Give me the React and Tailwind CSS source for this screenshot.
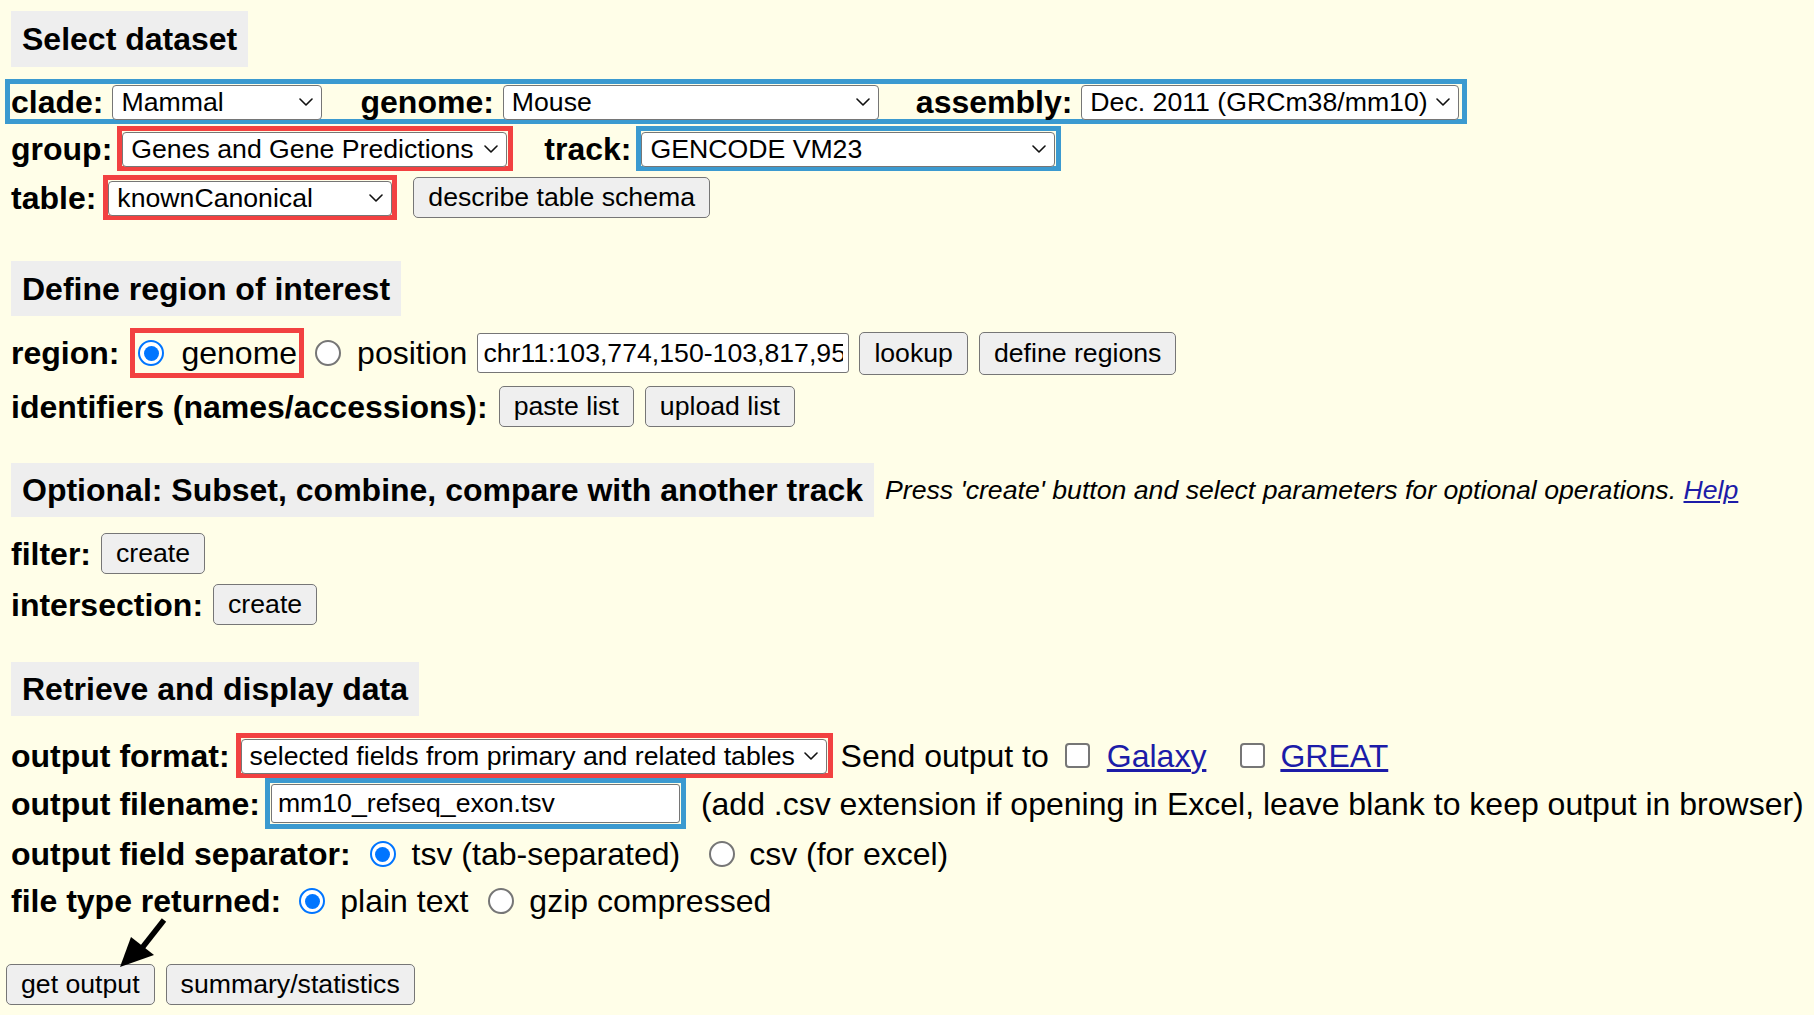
import React from 'react'

// small "v" used by the select boxes
function Chevron() {
  return (
    <svg
      className="pointer-events-none absolute right-[9px] top-1/2 -translate-y-1/2"
      width="14"
      height="8"
      viewBox="0 0 14 8"
      fill="none"
    >
      <path d="M1 1l6 6 6-6" stroke="#111" strokeWidth="1.6" strokeLinecap="round" strokeLinejoin="round" />
    </svg>
  )
}

function Select({ value, className = '' }) {
  return (
    <div className={`relative h-[35px] shrink-0 ${className}`}>
      <select
        defaultValue={value}
        className="h-full w-full appearance-none rounded-[4px] border border-[#767676] bg-white pl-[8px] pr-[28px] text-[26.67px] leading-none text-black outline-none"
      >
        <option>{value}</option>
      </select>
      <Chevron />
    </div>
  )
}

function Button({ children, className = '' }) {
  return (
    <button
      type="button"
      className={`h-[41px] shrink-0 rounded-[5px] border border-[#767676] bg-[#efefef] px-[14px] text-[26.67px] leading-none text-black ${className}`}
    >
      {children}
    </button>
  )
}

function Radio({ checked, className = '' }) {
  if (checked) {
    return (
      <span className={`flex h-[26px] w-[26px] shrink-0 items-center justify-center rounded-full border-2 border-[#0075ff] bg-white ${className}`}>
        <span className="h-[15px] w-[15px] rounded-full bg-[#0075ff]" />
      </span>
    )
  }
  return <span className={`h-[26px] w-[26px] shrink-0 rounded-full border-2 border-[#767676] bg-white ${className}`} />
}

function Checkbox({ className = '' }) {
  return <span className={`h-[25px] w-[25px] shrink-0 rounded-[4px] border-2 border-[#767676] bg-white ${className}`} />
}

function Title({ children, className = '' }) {
  return (
    <div className={`flex w-fit shrink-0 items-center bg-[#eeeeee] px-[11px] text-[32px] font-bold ${className}`}>
      {children}
    </div>
  )
}

export default function App() {
  return (
    <div className="relative min-h-screen bg-[#fffee8] pl-[11px] pt-[11px] font-['Liberation_Sans',Arial,Helvetica,sans-serif] text-[32px] leading-none text-black">
      {/* Select dataset */}
      <Title className="h-[56px]">Select dataset</Title>

      <div className="mt-[12px] -ml-[6px] flex h-[45px] w-fit items-center border-[5px] border-[#3b9ad0] pl-[1px] pr-[3px]">
        <span className="font-bold">clade:</span>
        <Select value="Mammal" className="ml-[9px] w-[210px]" />
        <span className="ml-[38px] font-bold">genome:</span>
        <Select value="Mouse" className="ml-[9px] w-[376px]" />
        <span className="ml-[37px] font-bold">assembly:</span>
        <Select value="Dec. 2011 (GRCm38/mm10)" className="ml-[9px] w-[378px]" />
      </div>

      <div className="mt-[2px] flex h-[45px] items-center">
        <span className="font-bold">group:</span>
        <div className="ml-[5px] border-[5px] border-[#f24141] pr-px">
          <Select value="Genes and Gene Predictions" className="w-[385px]" />
        </div>
        <span className="ml-[31px] font-bold">track:</span>
        <div className="ml-[5px] border-[5px] border-[#3b9ad0] pr-px">
          <Select value="GENCODE VM23" className="w-[414px]" />
        </div>
      </div>

      <div className="mt-[4px] flex h-[45px] items-center">
        <span className="font-bold">table:</span>
        <div className="ml-[7px] border-[5px] border-[#f24141]">
          <Select value="knownCanonical" className="w-[284px]" />
        </div>
        <Button className="ml-[16px]">describe table schema</Button>
      </div>

      {/* Define region of interest */}
      <Title className="mt-[41px] h-[55px]">Define region of interest</Title>

      <div className="mt-[12px] flex h-[50px] items-center">
        <span className="font-bold">region:</span>
        <div className="ml-[11px] flex h-[50px] items-center border-[5px] border-[#f24141] pl-[3px] pr-[2px]">
          <Radio checked />
          <span className="ml-[17px]">genome</span>
        </div>
        <Radio className="ml-[11px]" />
        <span className="ml-[16px]">position</span>
        <input
          readOnly
          value="chr11:103,774,150-103,817,958"
          className="ml-[10px] h-[40px] w-[372px] rounded-[3px] border border-[#767676] bg-white px-[5px] text-[26.67px] outline-none"
        />
        <Button className="ml-[10px] h-[43px]">lookup</Button>
        <Button className="ml-[11px] h-[43px]">define regions</Button>
      </div>

      <div className="mt-[5px] flex h-[47px] items-center">
        <span className="font-bold">identifiers (names/accessions):</span>
        <Button className="ml-[11px]">paste list</Button>
        <Button className="ml-[11px]">upload list</Button>
      </div>

      {/* Optional operations */}
      <div className="mt-[33px] flex h-[54px] items-center">
        <Title className="h-[54px]">Optional: Subset, combine, compare with another track</Title>
        <span className="ml-[11px] text-[26.67px] italic">
          Press &apos;create&apos; button and select parameters for optional operations.{' '}
          <a href="#" className="text-[#1c1ca8] underline">Help</a>
        </span>
      </div>

      <div className="mt-[13px] flex h-[47px] items-center">
        <span className="font-bold">filter:</span>
        <Button className="ml-[10px]">create</Button>
      </div>

      <div className="mt-[4px] flex h-[47px] items-center">
        <span className="font-bold">intersection:</span>
        <Button className="ml-[10px]">create</Button>
      </div>

      {/* Retrieve and display data */}
      <Title className="mt-[34px] h-[54px]">Retrieve and display data</Title>

      <div className="mt-[17px] flex h-[45px] items-center">
        <span className="font-bold">output format:</span>
        <div className="ml-[6px] border-[5px] border-[#f24141] pr-px">
          <Select value="selected fields from primary and related tables" className="w-[586px]" />
        </div>
        <span className="ml-[8px]">Send output to</span>
        <Checkbox className="ml-[16px]" />
        <a href="#" className="ml-[17px] text-[#1c1ca8] underline">Galaxy</a>
        <Checkbox className="ml-[34px]" />
        <a href="#" className="ml-[15px] text-[#1c1ca8] underline">GREAT</a>
      </div>

      <div className="flex h-[51px] items-center">
        <span className="font-bold">output filename:</span>
        <div className="ml-[5px] border-[5px] border-[#3b9ad0] p-px">
          <input
            readOnly
            value="mm10_refseq_exon.tsv"
            className="block h-[39px] w-[409px] rounded-[3px] border border-[#767676] bg-white px-[6px] text-[26.67px] outline-none"
          />
        </div>
        <span className="ml-[15px]">(add .csv extension if opening in Excel, leave blank to keep output in browser)</span>
      </div>

      <div className="mt-[1px] flex h-[48px] items-center">
        <span className="font-bold">output field separator:</span>
        <Radio checked className="ml-[19px]" />
        <span className="ml-[16px]">tsv (tab-separated)</span>
        <Radio className="ml-[29px]" />
        <span className="ml-[14px]">csv (for excel)</span>
      </div>

      <div className="flex h-[46px] items-center">
        <span className="font-bold">file type returned:</span>
        <Radio checked className="ml-[18px]" />
        <span className="ml-[15px]">plain text</span>
        <Radio className="ml-[20px]" />
        <span className="ml-[15px]">gzip compressed</span>
      </div>

      <div className="mt-[40px] -ml-[5px] flex items-center">
        <Button>get output</Button>
        <Button className="ml-[11px]">summary/statistics</Button>
      </div>

      {/* annotation arrow pointing at "get output" */}
      <svg className="pointer-events-none absolute left-[100px] top-[900px]" width="80" height="80" viewBox="0 0 80 80">
        <line x1="64" y1="20" x2="42" y2="48" stroke="#000" strokeWidth="5.5" />
        <polygon points="20,67 31,37 54,55" fill="#000" />
      </svg>
    </div>
  )
}
